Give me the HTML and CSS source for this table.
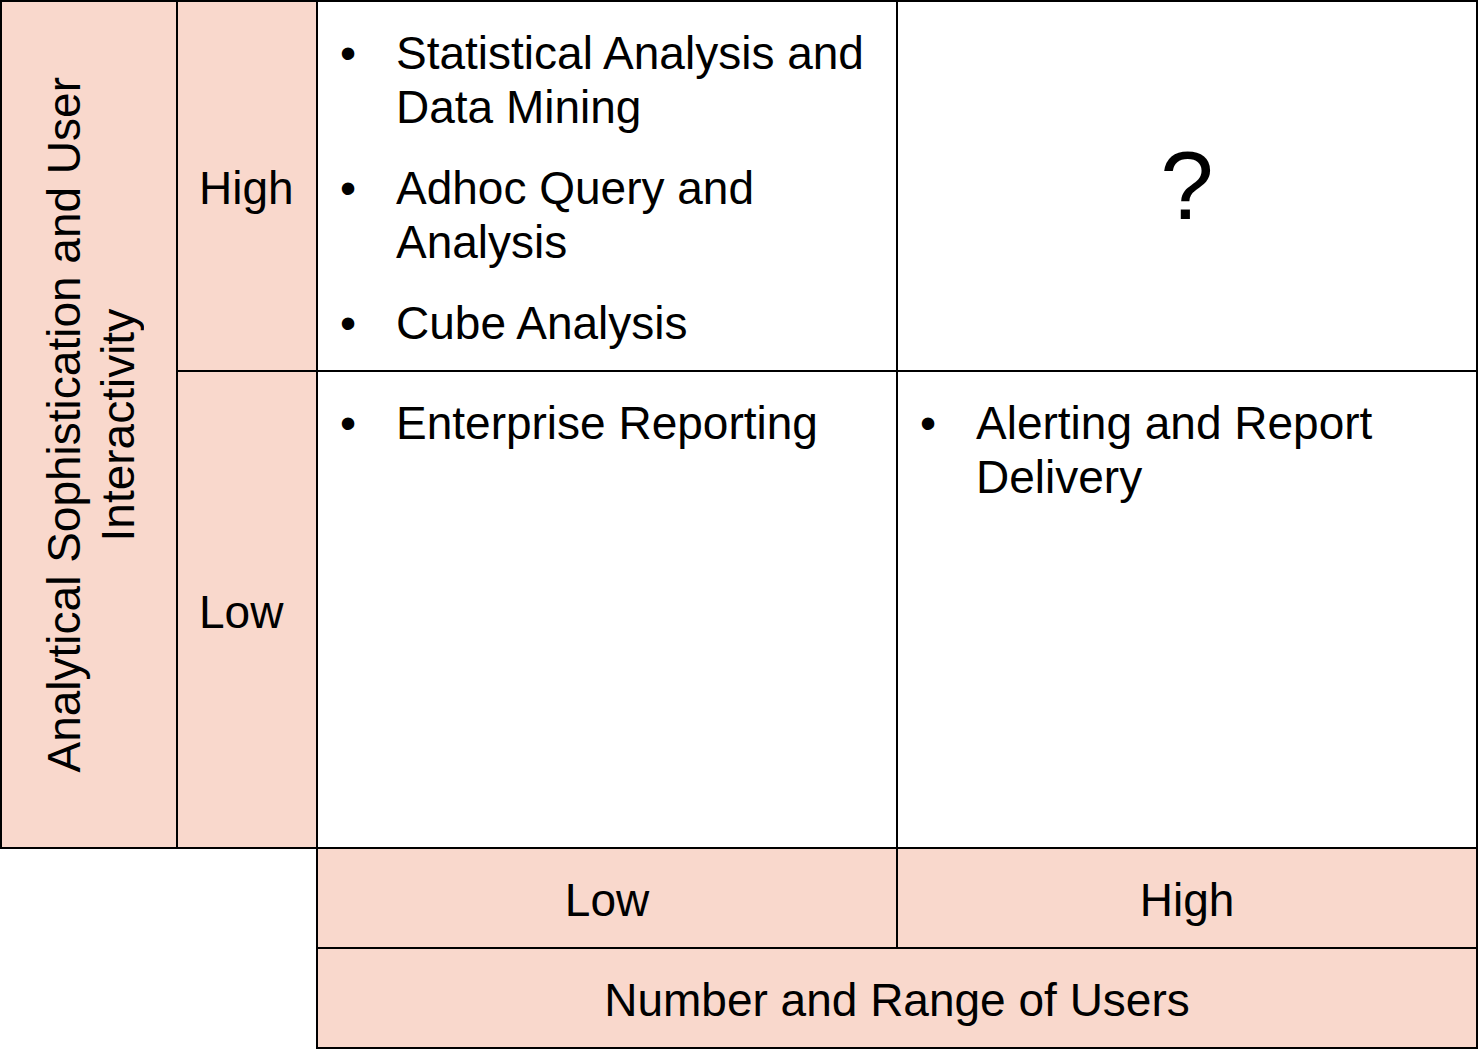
FILE: index.html
```html
<!DOCTYPE html>
<html lang="en">
<head>
<meta charset="utf-8">
<title>BI Quadrant</title>
<link rel="stylesheet" href="styles.css">
</head>
<body>
<div class="chart">
  <div class="cell pink axis-y">
    <div class="axis-y-text">Analytical Sophistication and User<br>Interactivity</div>
  </div>
  <div class="cell pink level r1">High</div>
  <div class="cell pink level r2">Low</div>

  <div class="cell quad r1 c3">
    <ul class="bullets">
      <li>Statistical Analysis and Data Mining</li>
      <li>Adhoc Query and Analysis</li>
      <li>Cube Analysis</li>
    </ul>
  </div>
  <div class="cell quad question r1 c4">?</div>
  <div class="cell quad r2 c3">
    <ul class="bullets">
      <li>Enterprise Reporting</li>
    </ul>
  </div>
  <div class="cell quad r2 c4">
    <ul class="bullets">
      <li>Alerting and Report Delivery</li>
    </ul>
  </div>

  <div class="cell pink axis-x-level c3">Low</div>
  <div class="cell pink axis-x-level c4">High</div>
  <div class="cell pink axis-x">Number and Range of Users</div>
</div>
</body>
</html>
```

FILE: styles.css
```css
html, body {
  margin: 0;
  padding: 0;
  background: #ffffff;
}

body {
  font-family: "Liberation Sans", Arial, sans-serif;
  font-size: 46px;
  line-height: 54px;
  color: #000000;
}

.chart {
  display: grid;
  grid-template-columns: 176px 140px 580px 580px;
  grid-template-rows: 370px 477px 100px 100px;
  padding: 1px;
  width: max-content;
}

.cell {
  margin: -1px;
  border: 2px solid #000000;
  min-width: 0;
  min-height: 0;
}

.pink {
  background: #f9d8cc;
}

.r1 { grid-row: 1; }
.r2 { grid-row: 2; }
.c3 { grid-column: 3; }
.c4 { grid-column: 4; }

.axis-y {
  grid-column: 1;
  grid-row: 1 / 3;
  display: flex;
  align-items: center;
  justify-content: center;
  padding-left: 4px;
}

.axis-y-text {
  writing-mode: vertical-rl;
  transform: rotate(180deg);
  text-align: center;
  white-space: nowrap;
}

.level {
  grid-column: 2;
  display: flex;
  align-items: center;
  padding: 4px 0 0 21px;
}

.quad {
  background: #ffffff;
  padding: 24px 10px 0 22px;
}

.bullets {
  list-style: none;
  margin: 0;
  padding: 0;
  display: flex;
  flex-direction: column;
  gap: 27px;
}

.bullets li {
  display: flex;
}

.bullets li::before {
  content: "\2022";
  flex: 0 0 56px;
}

.question {
  display: flex;
  align-items: center;
  justify-content: center;
  font-size: 96px;
  line-height: 96px;
  padding: 0;
}

.axis-x-level {
  grid-row: 3;
  display: flex;
  align-items: center;
  justify-content: center;
  padding-top: 4px;
}

.axis-x {
  grid-row: 4;
  grid-column: 3 / 5;
  display: flex;
  align-items: center;
  justify-content: center;
  padding-top: 4px;
}
```
